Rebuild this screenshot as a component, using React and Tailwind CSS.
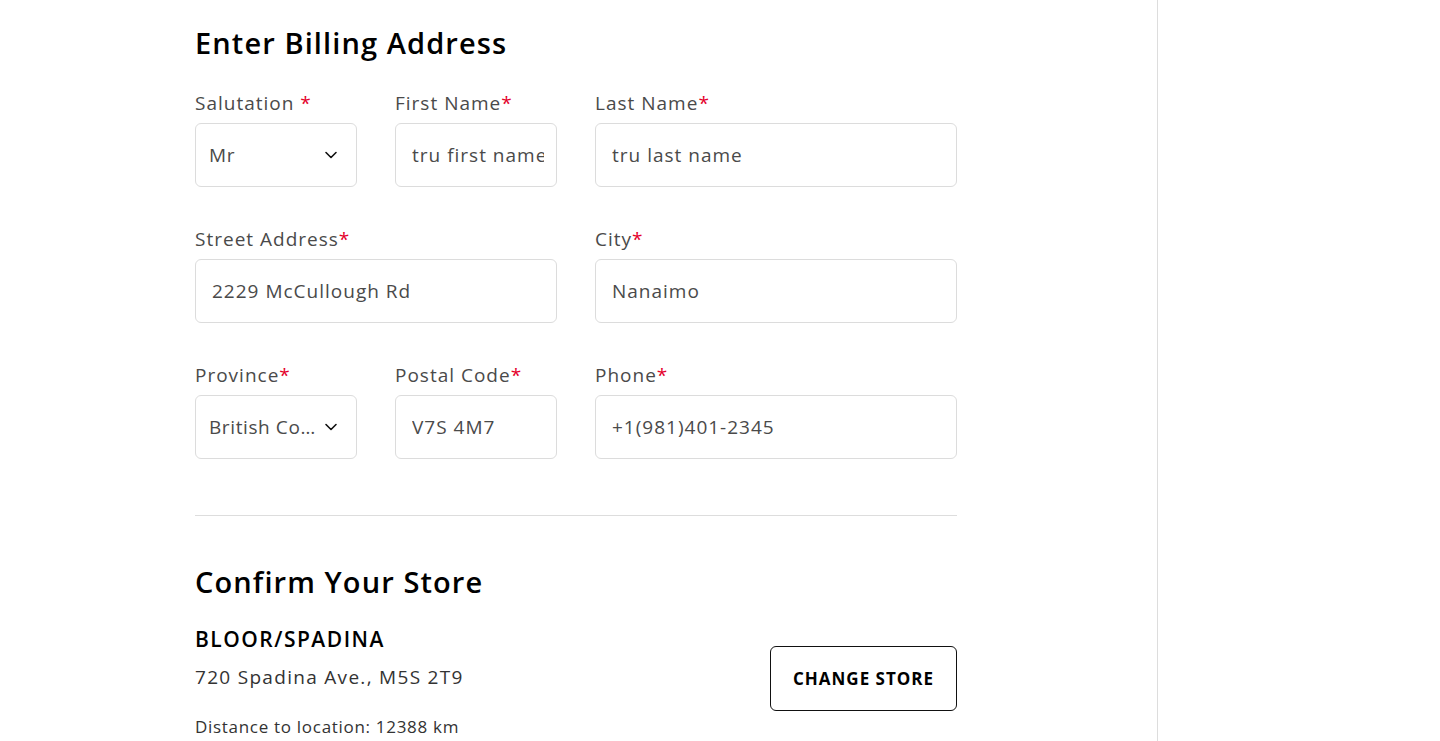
import React from "react";

const Chevron = () => (
  <svg width="14" height="14" viewBox="0 0 14 14" fill="none" className="shrink-0">
    <path d="M2 4.5 L7 9.5 L12 4.5" stroke="#111" strokeWidth="1.6" strokeLinecap="round" strokeLinejoin="round" />
  </svg>
);

const Label = ({ children, spaced }) => (
  <div className="text-[19px] leading-[24px] tracking-[1px] text-[#4a4a4a] h-[24px] mb-[8px] whitespace-nowrap">
    {children}
    {spaced ? " " : ""}
    <span className="text-[#e4002b]">*</span>
  </div>
);

const Input = ({ value }) => (
  <div className="h-[64px] rounded-[6px] border border-[#dcdcdc] flex items-center pl-[16px] pr-[12px] text-[19px] tracking-[1px] text-[#4a4a4a]">
    <span className="block overflow-hidden whitespace-nowrap">{value}</span>
  </div>
);

const Select = ({ value }) => (
  <div className="h-[64px] rounded-[6px] border border-[#dcdcdc] flex items-center pl-[13px] pr-[18px] gap-1 text-[19px] tracking-[0.6px] text-[#4a4a4a]">
    <span className="flex-1 truncate">{value}</span>
    <Chevron />
  </div>
);

export default function App() {
  return (
    <div className="w-[1440px] h-[741px] overflow-hidden bg-white flex" style={{ fontFamily: '"Open Sans", "Liberation Sans", sans-serif' }}>
      <div className="w-[1158px] border-r border-[#dddddd] pl-[195px] pt-[24px]">
        <div className="w-[762px]">
          <h1 className="text-[29px] leading-[38px] font-semibold text-black tracking-[1.1px]">Enter Billing Address</h1>
          <div className="grid grid-cols-4 gap-x-[38px] gap-y-[40px] mt-[29px]">
            <div>
              <Label spaced>Salutation</Label>
              <Select value="Mr" />
            </div>
            <div>
              <Label>First Name</Label>
              <Input value="tru first name" />
            </div>
            <div className="col-span-2">
              <Label>Last Name</Label>
              <Input value="tru last name" />
            </div>
            <div className="col-span-2">
              <Label>Street Address</Label>
              <Input value="2229 McCullough Rd" />
            </div>
            <div className="col-span-2">
              <Label>City</Label>
              <Input value="Nanaimo" />
            </div>
            <div>
              <Label>Province</Label>
              <Select value="British Columbia" />
            </div>
            <div>
              <Label>Postal Code</Label>
              <Input value="V7S 4M7" />
            </div>
            <div className="col-span-2">
              <Label>Phone</Label>
              <Input value="+1(981)401-2345" />
            </div>
          </div>
          <div className="border-t border-[#dddddd] mt-[56px]" />
          <h2 className="text-[29px] leading-[38px] font-semibold text-black mt-[47px] tracking-[1.1px]">Confirm Your Store</h2>
          <div className="flex items-start justify-between mt-[24px]">
            <div>
              <div className="text-[21px] leading-[28px] font-semibold text-black tracking-[1.5px]">BLOOR/SPADINA</div>
              <div className="text-[19px] leading-[26px] text-[#333] mt-[11px] tracking-[1.3px]">720 Spadina Ave., M5S 2T9</div>
              <div className="text-[17px] leading-[24px] text-[#333] mt-[25px] tracking-[0.7px]">Distance to location: 12388 km</div>
            </div>
            <button className="mt-[21px] w-[187px] h-[65px] rounded-[6px] border border-[#111] text-[17px] font-bold text-black tracking-[1px]">CHANGE STORE</button>
          </div>
        </div>
      </div>
      <div className="flex-1" />
    </div>
  );
}
